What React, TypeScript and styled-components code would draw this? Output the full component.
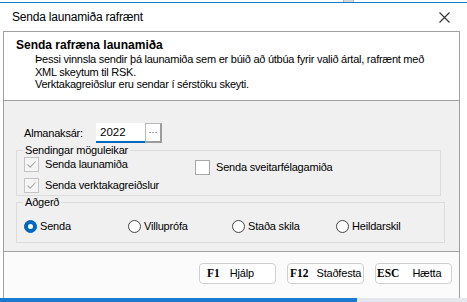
import React from "react";
import styled, { createGlobalStyle } from "styled-components";

const GlobalStyle = createGlobalStyle`
  html, body { margin: 0; padding: 0; background: #ffffff; }
  body {
    font-family: "Liberation Sans", Arial, sans-serif;
    font-size: 11px;
    color: #000;
  }
  * { box-sizing: border-box; }
`;

const Screen = styled.div`
  width: 467px;
  height: 302px;
  display: flex;
  flex-direction: column;
  overflow: hidden;
  background: #ffffff;
`;

const TopStrip = styled.div`
  height: 2px;
  display: flex;
  padding-left: 343px;
`;

const Tick = styled.div`
  width: 11px;
  height: 2px;
  background: #d6d6d6;
  border-left: 1px solid #b4b4b4;
  border-right: 1px solid #b4b4b4;
`;

const AccentLine = styled.div`
  height: 1px;
  background: #1a7ad0;
`;

const TitleBar = styled.div`
  height: 28px;
  display: flex;
  align-items: center;
  justify-content: space-between;
  padding: 0 17px 0 12px;
  font-size: 12px;
  letter-spacing: -0.2px;
  color: #000;
`;

const Frame = styled.div`
  margin-left: 3px;
  width: 457px;
  height: 267px;
  display: flex;
  flex-direction: column;
  border: 1px solid #a0a0a0;
  border-bottom: none;
`;

const Header = styled.div`
  height: 69px;
  background: #ffffff;
  border-bottom: 1px solid #a0a0a0;
  padding: 6px 0 0 12px;
`;

const HeaderTitle = styled.div`
  font-weight: bold;
  font-size: 12px;
  line-height: 14px;
`;

const HeaderText = styled.div`
  margin-top: 1px;
  padding-left: 19px;
  letter-spacing: -0.25px;
`;

const TextLine = styled.div`
  line-height: 12.6px;
  white-space: nowrap;
`;

const Body = styled.div`
  height: 151px;
  background: #f0f0f0;
  border-bottom: 1px solid #a0a0a0;
  padding: 22px 0 0 12px;
  display: flex;
  flex-direction: column;
  letter-spacing: -0.2px;
`;

const YearRow = styled.div`
  display: flex;
  align-items: center;
  height: 20px;
`;

const YearLabel = styled.label`
  width: 80px;
  padding-left: 8px;
`;

const YearInput = styled.div`
  width: 49px;
  height: 20px;
  background: #ffffff;
  border-bottom: 2px solid #0067c0;
  padding: 3px 0 0 4px;
  font-size: 11.5px;
  letter-spacing: 0;
`;

const BrowseButton = styled.div`
  width: 17px;
  height: 20px;
  background: #ffffff;
  border: 1px solid #b8b8b8;
  border-right: 2px solid #9c9c9c;
  border-bottom: 2px solid #9c9c9c;
  display: flex;
  align-items: center;
  justify-content: center;
  font-size: 9px;
  letter-spacing: 0;
  color: #333;
  padding-bottom: 2px;
`;

const Group = styled.fieldset<{ $width: number; $top: number; $padBottom: number }>`
  margin: ${(p) => p.$top}px 0 0 0;
  width: ${(p) => p.$width}px;
  border: 1px solid #dcdcdc;
  padding: 0 0 ${(p) => p.$padBottom}px 7px;
  min-width: 0;
`;

const Legend = styled.legend`
  padding: 0 2px;
  margin-left: -1px;
  font-size: 11px;
  line-height: 12px;
`;

const CheckGrid = styled.div`
  display: grid;
  grid-template-columns: 171px 1fr;
  row-gap: 5px;
`;

const CheckItem = styled.label<{ $shift?: number }>`
  display: flex;
  align-items: center;
  gap: 6px;
  height: 16px;
  margin-top: ${(p) => p.$shift ?? 0}px;
  margin-bottom: ${(p) => -(p.$shift ?? 0)}px;
`;

const CheckBox = styled.span<{ $disabled?: boolean }>`
  width: 15px;
  height: 15px;
  display: flex;
  align-items: center;
  justify-content: center;
  background: ${(p) => (p.$disabled ? "#f5f5f5" : "#ffffff")};
  border: 1px solid ${(p) => (p.$disabled ? "#c4c4c4" : "#a8a8a8")};
`;

const RadioRow = styled.div`
  display: grid;
  grid-template-columns: repeat(4, 104px);
  margin-top: 10px;
`;

const RadioItem = styled.label`
  display: flex;
  align-items: center;
  gap: 3px;
  height: 16px;
`;

const RadioCircle = styled.span<{ $checked?: boolean }>`
  width: 13px;
  height: 13px;
  border-radius: 50%;
  display: flex;
  align-items: center;
  justify-content: center;
  background: ${(p) => (p.$checked ? "#0067c0" : "#ffffff")};
  border: 1px solid ${(p) => (p.$checked ? "#0067c0" : "#444444")};
`;

const RadioDot = styled.span`
  width: 5px;
  height: 5px;
  border-radius: 50%;
  background: #ffffff;
`;

const Footer = styled.div`
  height: 46px;
  background: #fbfbfb;
  display: flex;
  justify-content: flex-end;
  align-items: flex-start;
  gap: 11px;
  padding: 11px 7px 0 0;
`;

const KeyButton = styled.button<{ $pad: number }>`
  width: 77px;
  height: 21px;
  background: #ffffff;
  border: 1px solid #d0d0d0;
  border-radius: 4px;
  display: flex;
  align-items: center;
  padding: 0 0 1px ${(p) => p.$pad}px;
  font-family: "Liberation Sans", Arial, sans-serif;
  font-size: 11px;
  letter-spacing: -0.2px;
  color: #000;
`;

const KeyName = styled.span`
  font-family: "Liberation Serif", "Times New Roman", serif;
  font-weight: bold;
  font-size: 11.5px;
  letter-spacing: 0;
`;

const KeyLabel = styled.span<{ $gap: number }>`
  margin-left: ${(p) => p.$gap}px;
`;

const BottomStrip = styled.div`
  height: 4px;
  display: flex;
`;

const BottomBlue = styled.div`
  width: 357px;
  background: #1a7ad0;
`;

const BottomGrey = styled.div`
  flex: 1;
  background: #e4e8ec;
`;

const CloseIcon = () => (
  <svg width="11" height="11" viewBox="0 0 11 11">
    <path d="M0.5 0.5 L10.5 10.5 M10.5 0.5 L0.5 10.5" stroke="#333" strokeWidth="1.1" fill="none" />
  </svg>
);

const CheckMark = () => (
  <svg width="13" height="13" viewBox="0 0 13 13">
    <polyline points="2.5,6.5 5.2,9.2 10.5,3.5" stroke="#a8a8a8" strokeWidth="1.1" fill="none" />
  </svg>
);

const buttons = [
  { key: "F1", label: "Hjálp", pad: 7, gap: 10 },
  { key: "F12", label: "Staðfesta", pad: 2, gap: 8 },
  { key: "ESC", label: "Hætta", pad: 1, gap: 13 },
];

const radios = ["Senda", "Villupróf­a".replace("\u00ad", ""), "Staða skila", "Heildarskil"];

export default function App() {
  return (
    <>
      <GlobalStyle />
      <Screen>
        <TopStrip>
          <Tick />
        </TopStrip>
        <AccentLine />
        <TitleBar>
          <span>Senda launamiða rafrænt</span>
          <CloseIcon />
        </TitleBar>
        <Frame>
          <Header>
            <HeaderTitle>Senda rafræna launamiða</HeaderTitle>
            <HeaderText>
              <TextLine>Þessi vinnsla sendir þá launamiða sem er búið að útbúa fyrir valið ártal, rafrænt með</TextLine>
              <TextLine>XML skeytum til RSK.</TextLine>
              <TextLine>Verktakagreiðslur eru sendar í sérstöku skeyti.</TextLine>
            </HeaderText>
          </Header>
          <Body>
            <YearRow>
              <YearLabel>Almanaksár:</YearLabel>
              <YearInput>2022</YearInput>
              <BrowseButton>···</BrowseButton>
            </YearRow>
            <Group $width={425} $top={1} $padBottom={2}>
              <Legend>Sendingar möguleikar</Legend>
              <CheckGrid>
                <CheckItem>
                  <CheckBox $disabled>
                    <CheckMark />
                  </CheckBox>
                  Senda launamiða
                </CheckItem>
                <CheckItem $shift={3}>
                  <CheckBox />
                  Senda sveitarfélagamiða
                </CheckItem>
                <CheckItem>
                  <CheckBox $disabled>
                    <CheckMark />
                  </CheckBox>
                  Senda verktakagreiðslur
                </CheckItem>
              </CheckGrid>
            </Group>
            <Group $width={429} $top={0} $padBottom={8}>
              <Legend>Aðgerð</Legend>
              <RadioRow>
                {radios.map((r, i) => (
                  <RadioItem key={r}>
                    <RadioCircle $checked={i === 0}>{i === 0 && <RadioDot />}</RadioCircle>
                    {r}
                  </RadioItem>
                ))}
              </RadioRow>
            </Group>
          </Body>
          <Footer>
            {buttons.map((b) => (
              <KeyButton key={b.key} $pad={b.pad}>
                <KeyName>{b.key}</KeyName>
                <KeyLabel $gap={b.gap}>{b.label}</KeyLabel>
              </KeyButton>
            ))}
          </Footer>
        </Frame>
        <BottomStrip>
          <BottomBlue />
          <BottomGrey />
        </BottomStrip>
      </Screen>
    </>
  );
}
